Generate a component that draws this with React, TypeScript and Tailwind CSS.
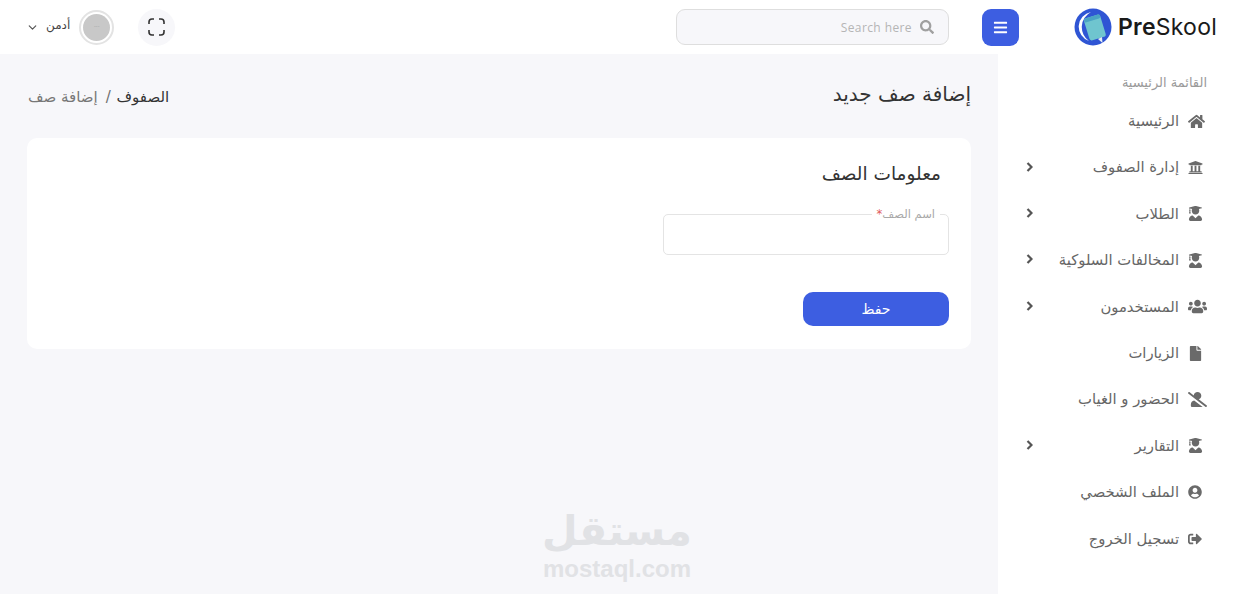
import { ChevronDown } from 'lucide-react';
import {
  FaBars,
  FaFile,
  FaHome,
  FaSearch,
  FaSignOutAlt,
  FaUniversity,
  FaUserCircle,
  FaUserGraduate,
  FaUsers,
  FaUserSlash,
} from 'react-icons/fa';

const menuItems = [
  { label: 'الرئيسية', icon: FaHome, size: 'text-[17px]' },
  { label: 'إدارة الصفوف', icon: FaUniversity, size: 'text-[15px]', arrow: true },
  { label: 'الطلاب', icon: FaUserGraduate, size: 'text-[15px]', arrow: true },
  { label: 'المخالفات السلوكية', icon: FaUserGraduate, size: 'text-[15px]', arrow: true },
  { label: 'المستخدمون', icon: FaUsers, size: 'text-[19px]', arrow: true },
  { label: 'الزيارات', icon: FaFile, size: 'text-[15px]' },
  { label: 'الحضور و الغياب', icon: FaUserSlash, size: 'text-[19px]' },
  { label: 'التقارير', icon: FaUserGraduate, size: 'text-[15px]', arrow: true },
  { label: 'الملف الشخصي', icon: FaUserCircle, size: 'text-[14px]' },
  { label: 'تسجيل الخروج', icon: FaSignOutAlt, size: 'text-[14px]' },
];

function Logo() {
  return (
    <div className="flex items-center gap-[6px]" dir="ltr">
      <svg width="38" height="38" viewBox="0 0 38 38">
        <circle cx="19" cy="19" r="18.5" fill="#2f55d4" />
        <path d="M17 4 A15 15 0 0 0 15 33 A17 17 0 0 1 17 4 Z" fill="#ffffff" />
        <g transform="rotate(-17 21 20)">
          <rect x="12.5" y="8" width="17" height="23" rx="2.5" fill="#6fc5cf" />
          <rect x="12.5" y="8" width="17" height="4" rx="2" fill="#4aa3c4" />
        </g>
        <path d="M24 31 L28 29 L28.5 35 Z" fill="#e8edf5" />
      </svg>
      <span className="text-[23px] leading-none text-[#1a1a1a] tracking-[0.25px] font-['Inter',sans-serif]">
        <span className="font-semibold">Pre</span>Skool
      </span>
    </div>
  );
}

function Header() {
  return (
    <header className="h-[54px] bg-white flex items-center shrink-0">
      <div className="w-[215px] flex justify-start shrink-0 pr-[17px]">
        <Logo />
      </div>
      <button className="w-[37px] h-[37px] rounded-[9px] bg-[#3d5ee1] flex items-center justify-center text-white text-[15px] shrink-0">
        <FaBars />
      </button>
      <div className="w-[273px] h-[36px] mr-[33px] bg-[#f7f7fa] border border-[#dedede] rounded-[9px] flex items-center pr-[14px] gap-[8px] shrink-0">
        <FaSearch className="text-[14px] text-[#a0a0a0]" />
        <span className="text-[12px] text-[#b5b5b5] font-['Open_Sans',sans-serif] tracking-[0.4px] mt-[2px]">Search here</span>
      </div>
      <div className="flex-1" />
      <div className="flex items-center pl-[26px]">
        <div className="w-[37px] h-[37px] rounded-full bg-[#f7f7fa] flex items-center justify-center text-[#333333] ml-[24px]">
          <svg width="17" height="18" viewBox="0 0 17 18" fill="none" stroke="currentColor" strokeWidth="1.6">
            <path d="M1 6 V4 a3 3 0 0 1 3 -3 H6" />
            <path d="M11 1 H13 a3 3 0 0 1 3 3 V6" />
            <path d="M16 12 V14 a3 3 0 0 1 -3 3 H11" />
            <path d="M6 17 H4 a3 3 0 0 1 -3 -3 V12" />
          </svg>
        </div>
        <div className="w-[35px] h-[35px] rounded-full border-2 border-[#e3e3e3] bg-white p-[2px] ml-[9px]">
          <div className="w-full h-full rounded-full bg-[#c8c8c8] flex items-center justify-center text-[5px] text-[#a0a0a0]">
            ---
          </div>
        </div>
        <span className="text-[12px] leading-none text-[#444444] -mt-[4px] ml-[7px]">أدمن</span>
        <ChevronDown size={13} strokeWidth={2.2} className="text-[#555555]" />
      </div>
    </header>
  );
}

function Sidebar() {
  return (
    <aside className="w-[236px] bg-white shrink-0 pt-[20px] pr-[27px] pl-[28px]">
      <div className="h-[16px] leading-[16px] text-[13px] text-[#9a9a9a] mt-[1px]">القائمة الرئيسية</div>
      <ul className="mt-[7px]">
        {menuItems.map((item) => (
          <li key={item.label} className="h-[46.4px] flex items-center text-[#6a6a6a]">
            <span className="w-[19px] flex justify-end shrink-0">
              <item.icon className={item.size} />
            </span>
            <span className="text-[14.8px] mr-[9px] text-[#666666] whitespace-nowrap">{item.label}</span>
            {item.arrow && (
              <svg width="7" height="10" viewBox="0 0 7 10" className="mr-auto -mt-[2px] text-[#555555]">
                <path d="M1.5 1 L5.5 5 L1.5 9" fill="none" stroke="currentColor" strokeWidth="2.2" />
              </svg>
            )}
          </li>
        ))}
      </ul>
    </aside>
  );
}

function ClassForm() {
  return (
    <section className="bg-white rounded-[10px] h-[211px] pt-[24px] pr-[30px] pl-[22px]">
      <h2 className="text-[18.5px] leading-[24px] text-[#333333]">معلومات الصف</h2>
      <div className="relative w-[286px] h-[41px] mt-[28px] -mr-[8px] border border-[#e4e4e4] rounded-[5px]">
        <label className="absolute -top-[7px] right-[8px] bg-white px-[5px] text-[11.5px] leading-[12px] text-[#a8a8a8]">
          اسم الصف<span className="text-[#e05a5a]">*</span>
        </label>
      </div>
      <button className="block w-[146px] h-[34px] mt-[37px] -mr-[8px] rounded-[10px] bg-[#3d5ee1] text-white text-[14px]">
        حفظ
      </button>
    </section>
  );
}

export default function App() {
  return (
    <div dir="rtl" className="w-[1234px] h-[594px] overflow-hidden flex flex-col bg-white font-['DejaVu_Sans','Noto_Sans',sans-serif]">
      <Header />
      <div className="flex flex-1 min-h-0">
        <Sidebar />
        <main className="relative flex-1 bg-[#f7f7fa] pt-[25px] pr-[27px] pl-[27px]">
          <div className="flex items-center justify-between h-[30px]">
            <h1 className="text-[20px] text-[#333333] leading-[28px]">إضافة صف جديد</h1>
            <div className="text-[15px] text-[#333333] mt-[7px] pl-[1px]">
              الصفوف <span className="text-[#6f6f6f] mr-[1px] ml-[8px]">/</span>
              <span className="text-[#777777]">إضافة صف</span>
            </div>
          </div>
          <div className="mt-[29px]">
            <ClassForm />
          </div>
          <div className="absolute bottom-[11px] left-[543px] w-[148px] flex flex-col items-center text-[#e1e2e5]" dir="ltr">
            <div className="text-[41px] leading-[48px] font-bold" dir="rtl">مستقل</div>
            <div className="text-[24px] leading-[28px] font-bold font-['Liberation_Sans',sans-serif] whitespace-nowrap">mostaql.com</div>
          </div>
        </main>
      </div>
    </div>
  );
}
